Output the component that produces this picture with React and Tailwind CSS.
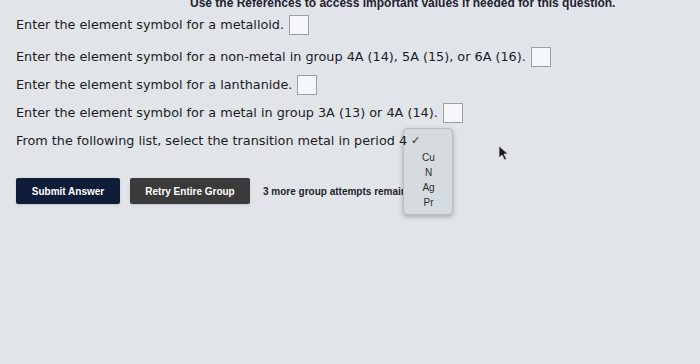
import React from 'react';

function Box({ className = '' }) {
  return <span className={`inline-block w-[20px] h-[20px] border border-[#9aa0a8] bg-[#f4f6f8] align-middle ml-[5px] ${className}`}></span>;
}

function Line({ children, className = '' }) {
  return (
    <div className={`flex items-center h-[28px] text-[12.8px] text-[#1a1c28] ${className}`}>
      {children}
    </div>
  );
}

export default function App() {
  const options = ['Cu', 'N', 'Ag', 'Pr'];

  return (
    <div className="relative w-[700px] h-[364px] overflow-hidden bg-[#e1e4e9]" style={{ fontFamily: '"DejaVu Sans", Verdana, sans-serif' }}>
      {/* references header, clipped at top */}
      <div className="-mt-[6px] h-[18px] leading-[18px] pl-[190px] text-[12px] font-bold text-[#1f2230] whitespace-nowrap" style={{ fontFamily: '"Liberation Sans", Arial, sans-serif' }}>
        Use the References to access important values if needed for this question.
      </div>

      <div className="pl-[16px] -mt-[1px]">
        <Line>Enter the element symbol for a metalloid.<Box /></Line>
        <Line className="mt-[4px]">Enter the element symbol for a non-metal in group 4A (14), 5A (15), or 6A (16).<Box /></Line>
        <Line>Enter the element symbol for a lanthanide.<Box /></Line>
        <Line>Enter the element symbol for a metal in group 3A (13) or 4A (14).<Box /></Line>
        <Line className="relative z-10">From the following list, select the transition metal in period 4</Line>

        <div className="flex items-center mt-[23px] gap-[10px]" style={{ fontFamily: '"Liberation Sans", Arial, sans-serif' }}>
          <button className="w-[104px] h-[26px] rounded-[2px] bg-[#0f1d38] text-white text-[10px] font-bold shadow-sm">Submit Answer</button>
          <button className="w-[120px] h-[26px] rounded-[2px] bg-[#3b3a3a] text-white text-[10px] font-bold shadow-sm">Retry Entire Group</button>
          <span className="ml-[3px] text-[10px] font-bold text-[#22242c] whitespace-nowrap">3 more group attempts remaining</span>
        </div>
      </div>

      {/* open select popup */}
      <div className="absolute left-[403px] top-[128px] w-[50px] h-[87px] rounded-[4px] border border-[#b6bcc2] bg-[#d6dbdf] shadow-[0_2px_5px_rgba(0,0,0,0.25)] text-[10px] text-[#2a2e38]" style={{ fontFamily: '"Liberation Sans", Arial, sans-serif' }}>
        <div className="pl-[7px] pt-[6px] h-[21px] text-[11px] leading-none">✓</div>
        <div className="flex flex-col items-center leading-[15px] pl-[1px]">
          {options.map(o => <span key={o}>{o}</span>)}
        </div>
      </div>

      {/* mouse cursor */}
      <svg className="absolute left-[498px] top-[145px]" width="12" height="16" viewBox="0 0 12 16">
        <path d="M1 1 L1 13 L4 10 L6.5 15 L8.5 14 L6 9 L10 9 Z" fill="#1a1a1a" stroke="#ddd" strokeWidth="0.8" />
      </svg>
    </div>
  );
}
